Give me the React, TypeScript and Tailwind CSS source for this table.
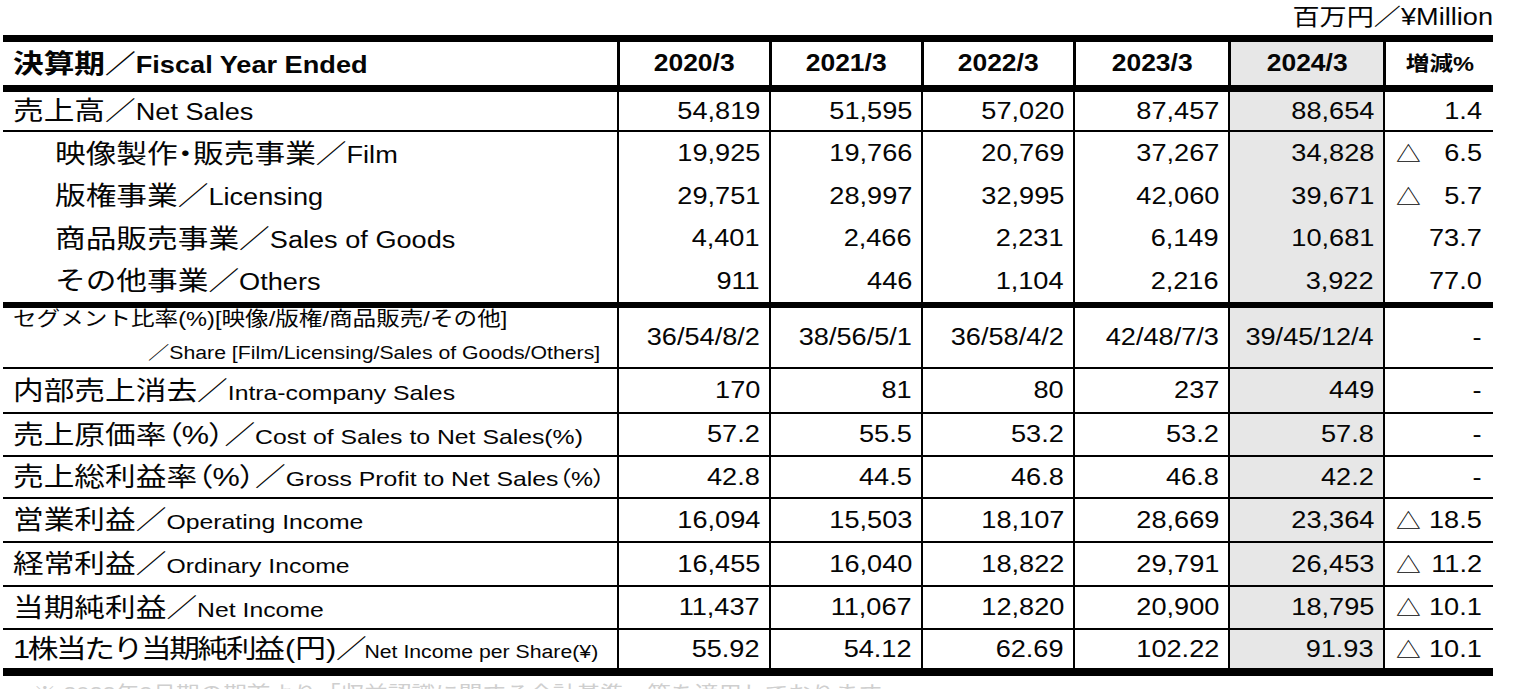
import React from "react";

const COLS = "grid grid-cols-[614px_152px_152px_152px_155px_155px_110px]";

function L({ children, className = "" }: { children: React.ReactNode; className?: string }) {
  return (
    <span className={"inline-block origin-left scale-x-[1.18] whitespace-nowrap leading-none " + className}>
      {children}
    </span>
  );
}

function R({ children, className = "" }: { children: React.ReactNode; className?: string }) {
  return (
    <span className={"inline-block origin-right scale-x-[1.18] whitespace-nowrap leading-none " + className}>
      {children}
    </span>
  );
}

function Row({
  h,
  label,
  vals,
  ch,
  labelClass = "flex items-center pl-[10px]",
}: {
  h: string;
  label: React.ReactNode;
  vals: string[];
  ch: string;
  labelClass?: string;
}) {
  const neg = ch.startsWith("△");
  return (
    <div className={COLS + " border-black " + h}>
      <div className={labelClass}>{label}</div>
      {vals.map((v, i) => (
        <div
          key={i}
          className={
            i === 4
              ? "flex items-center justify-end pr-[9px] border-l-2 border-black bg-[#e7e7e7]"
              : "flex items-center justify-end pr-[9px] border-l-2 border-black"
          }
        >
          <R className="text-[23px]">{v}</R>
        </div>
      ))}
      <div className="flex items-center justify-between pl-[11px] pr-[11px] border-l-2 border-black">
        {neg ? <L className="text-[21px]">△</L> : <span />}
        <R className="text-[23px]">{neg ? ch.slice(2) : ch}</R>
      </div>
    </div>
  );
}

const P = "[font-feature-settings:'palt']";

export default function App() {
  return (
    <div className="w-[1513px] h-[689px] overflow-hidden bg-white text-[#050505] font-['Liberation_Sans','Noto_Sans_CJK_JP',sans-serif]">
      <div className="ml-[3px] w-[1490px]">
        <div className="h-[35px] flex items-center justify-end">
          <R className="text-[23px]">百万円／¥Million</R>
        </div>

        <div className="border-t-[7px] border-black">
          {/* header */}
          <div className={COLS + " h-[50px] border-b-[7px] border-black font-bold"}>
            <div className="flex items-center pl-[10px]">
              <L>
                <span className="text-[26px]">決算期／</span>
                <span className="text-[23px]">Fiscal Year Ended</span>
              </L>
            </div>
            {["2020/3", "2021/3", "2022/3", "2023/3"].map((y) => (
              <div key={y} className="flex items-center justify-center border-l-[3px] border-black">
                <span className="inline-block scale-x-[1.15] text-[23px] leading-none">{y}</span>
              </div>
            ))}
            <div className="flex items-center justify-center border-l-[3px] border-black bg-[#e7e7e7]">
              <span className="inline-block scale-x-[1.15] text-[23px] leading-none">2024/3</span>
            </div>
            <div className="flex items-center justify-center border-l-[3px] border-black">
              <span className="inline-block scale-x-[1.18] text-[20px] leading-none">増減%</span>
            </div>
          </div>

          <Row
            h="h-[40px] border-b-2"
            label={
              <L>
                <span className="text-[26px]">売上高／</span>
                <span className="text-[23px]">Net Sales</span>
              </L>
            }
            vals={["54,819", "51,595", "57,020", "87,457", "88,654"]}
            ch="1.4"
          />
          <Row
            h="h-[43px]"
            labelClass="flex items-center pl-[52px]"
            label={
              <L>
                <span className="text-[26px]">
                  映像製作<span className={P}>・</span>販売事業／
                </span>
                <span className="text-[23px]">Film</span>
              </L>
            }
            vals={["19,925", "19,766", "20,769", "37,267", "34,828"]}
            ch="△ 6.5"
          />
          <Row
            h="h-[42px]"
            labelClass="flex items-center pl-[52px]"
            label={
              <L>
                <span className="text-[26px]">版権事業／</span>
                <span className="text-[23px]">Licensing</span>
              </L>
            }
            vals={["29,751", "28,997", "32,995", "42,060", "39,671"]}
            ch="△ 5.7"
          />
          <Row
            h="h-[43px]"
            labelClass="flex items-center pl-[52px]"
            label={
              <L>
                <span className="text-[26px]">商品販売事業／</span>
                <span className="text-[23px]">Sales of Goods</span>
              </L>
            }
            vals={["4,401", "2,466", "2,231", "6,149", "10,681"]}
            ch="73.7"
          />
          <Row
            h="h-[48px] border-b-[6px]"
            labelClass="flex items-center pl-[52px]"
            label={
              <L>
                <span className="text-[26px]">その他事業／</span>
                <span className="text-[23px]">Others</span>
              </L>
            }
            vals={["911", "446", "1,104", "2,216", "3,922"]}
            ch="77.0"
          />
          <Row
            h="h-[61px] border-b-2"
            labelClass="flex flex-col justify-center gap-[9px] pl-[10px] pr-[17px]"
            label={
              <>
                <div>
                  <L className="text-[20px]">セグメント比率(%)[映像/版権/商品販売/その他]</L>
                </div>
                <div className="text-right">
                  <R className="text-[18px]">／Share [Film/Licensing/Sales of Goods/Others]</R>
                </div>
              </>
            }
            vals={["36/54/8/2", "38/56/5/1", "36/58/4/2", "42/48/7/3", "39/45/12/4"]}
            ch="-"
          />
          <Row
            h="h-[45px] border-b-2"
            label={
              <L>
                <span className="text-[26px]">内部売上消去／</span>
                <span className="text-[21px]">Intra-company Sales</span>
              </L>
            }
            vals={["170", "81", "80", "237", "449"]}
            ch="-"
          />
          <Row
            h="h-[43px] border-b-2"
            label={
              <L>
                <span className="text-[26px]">
                  売上原価率<span className={P}>（</span>%<span className={P}>）</span>／
                </span>
                <span className="text-[21px]">Cost of Sales to Net Sales(%)</span>
              </L>
            }
            vals={["57.2", "55.5", "53.2", "53.2", "57.8"]}
            ch="-"
          />
          <Row
            h="h-[42px] border-b-2"
            label={
              <L>
                <span className="text-[26px]">
                  売上総利益率<span className={P}>（</span>%<span className={P}>）</span>／
                </span>
                <span className="text-[21px]">
                  Gross Profit to Net Sales<span className={P}>（</span>%<span className={P}>）</span>
                </span>
              </L>
            }
            vals={["42.8", "44.5", "46.8", "46.8", "42.2"]}
            ch="-"
          />
          <Row
            h="h-[44px] border-b-2"
            label={
              <L>
                <span className="text-[26px]">営業利益／</span>
                <span className="text-[21px]">Operating Income</span>
              </L>
            }
            vals={["16,094", "15,503", "18,107", "28,669", "23,364"]}
            ch="△ 18.5"
          />
          <Row
            h="h-[44px] border-b-2"
            label={
              <L>
                <span className="text-[26px]">経常利益／</span>
                <span className="text-[21px]">Ordinary Income</span>
              </L>
            }
            vals={["16,455", "16,040", "18,822", "29,791", "26,453"]}
            ch="△ 11.2"
          />
          <Row
            h="h-[43px] border-b-2"
            label={
              <L>
                <span className="text-[26px]">当期純利益／</span>
                <span className="text-[21px]">Net Income</span>
              </L>
            }
            vals={["11,437", "11,067", "12,820", "20,900", "18,795"]}
            ch="△ 10.1"
          />
          <Row
            h="h-[46px] border-b-[8px]"
            label={
              <L>
                <span className="text-[26px] tracking-[-2px]">
                  1株当たり当期純利益<span className="mx-[2px]">(</span>円<span className="mx-[2px]">)</span>／
                </span>
                <span className="text-[18px]">Net Income per Share(¥)</span>
              </L>
            }
            vals={["55.92", "54.12", "62.69", "102.22", "91.93"]}
            ch="△ 10.1"
          />
        </div>

        <div className="mt-[8px] pl-[30px] text-[20px] leading-none text-[#cfcfcf] whitespace-nowrap">
          <L>※ 2022年3月期の期首より「収益認識に関する会計基準」等を適用しております。</L>
        </div>
      </div>
    </div>
  );
}
